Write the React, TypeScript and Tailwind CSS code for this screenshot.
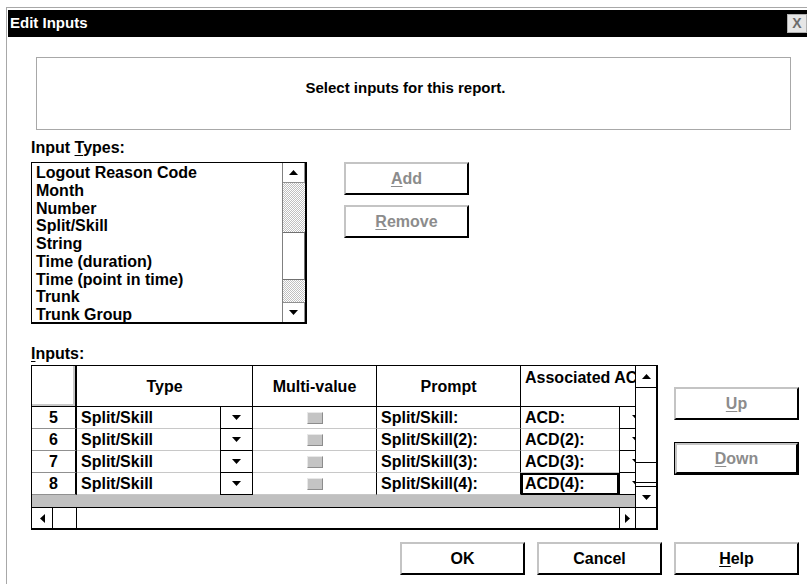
import React from "react";

const font = "font-['Liberation_Sans',Arial,sans-serif]";

function Tri({ dir }: { dir: "up" | "down" | "left" | "right" }) {
  if (dir === "up")
    return (
      <svg width="9" height="5" viewBox="0 0 9 5">
        <polygon points="0,5 9,5 4.5,0" fill="#000" />
      </svg>
    );
  if (dir === "down")
    return (
      <svg width="9" height="5" viewBox="0 0 9 5">
        <polygon points="0,0 9,0 4.5,5" fill="#000" />
      </svg>
    );
  if (dir === "left")
    return (
      <svg width="5" height="9" viewBox="0 0 5 9">
        <polygon points="5,0 5,9 0,4.5" fill="#000" />
      </svg>
    );
  return (
    <svg width="5" height="9" viewBox="0 0 5 9">
      <polygon points="0,0 0,9 5,4.5" fill="#000" />
    </svg>
  );
}

function Button({
  pre = "",
  u = "",
  post = "",
  disabled = false,
  isDefault = false,
}: {
  pre?: string;
  u?: string;
  post?: string;
  disabled?: boolean;
  isDefault?: boolean;
}) {
  const face = (
    <div
      className={`flex h-full w-full items-center justify-center border-2 border-t-[#c4c4c4] border-l-[#c4c4c4] border-r-black border-b-black bg-white text-[16px] font-bold ${
        disabled ? "text-[#8c8c8c]" : "text-black"
      }`}
    >
      {pre}
      {u && <span className="underline underline-offset-2">{u}</span>}
      {post}
    </div>
  );
  if (isDefault)
    return <div className="h-[33px] w-[125px] border border-black">{face}</div>;
  return <div className="h-[33px] w-[125px]">{face}</div>;
}

const inputTypes = [
  "Logout Reason Code",
  "Month",
  "Number",
  "Split/Skill",
  "String",
  "Time (duration)",
  "Time (point in time)",
  "Trunk",
  "Trunk Group",
];

const rows = [
  { n: 5, prompt: "Split/Skill:", acd: "ACD:" },
  { n: 6, prompt: "Split/Skill(2):", acd: "ACD(2):" },
  { n: 7, prompt: "Split/Skill(3):", acd: "ACD(3):" },
  { n: 8, prompt: "Split/Skill(4):", acd: "ACD(4):", focus: true },
];

function ListBox() {
  return (
    <div className="mt-[5px] flex h-[162px] w-[276px] border-l border-t border-r-2 border-b-2 border-black">
      <div className="flex-1 whitespace-nowrap pl-[4px] pt-[1px] text-[16px] font-bold leading-[17.75px]">
        {inputTypes.map((t) => (
          <div key={t}>{t}</div>
        ))}
      </div>
      <div className="flex w-[23px] flex-col border-l border-[#808080]">
        <div className="flex h-[20px] items-center justify-center border-b border-r border-[#909090] bg-white">
          <Tri dir="up" />
        </div>
        <div className="h-[49px] bg-[image:repeating-conic-gradient(#c0c0c0_0%_25%,#ffffff_0%_50%)] bg-[length:2px_2px]" />
        <div className="h-[48px] border-b border-r border-t border-[#707070] bg-white" />
        <div className="h-[22px] bg-[image:repeating-conic-gradient(#c0c0c0_0%_25%,#ffffff_0%_50%)] bg-[length:2px_2px]" />
        <div className="flex h-[20px] items-center justify-center border-r border-t border-[#909090] bg-white">
          <Tri dir="down" />
        </div>
      </div>
    </div>
  );
}

function Grid() {
  return (
    <div className="mt-[2px] flex h-[165px] w-[627px] border-l border-t border-r-2 border-b-2 border-black text-[16px] font-bold">
      <div className="flex w-[603px] flex-col">
        <div className="flex h-[41px] border-b border-black">
          <div className="w-[45px] border-r-2 border-black">
            <div className="h-full border-b-2 border-r-2 border-[#c8c8c8]" />
          </div>
          <div className="flex w-[176px] items-center justify-center border-r border-black pt-[2px]">Type</div>
          <div className="flex w-[124px] items-center justify-center border-r border-black pt-[2px]">Multi-value</div>
          <div className="flex w-[144px] items-center justify-center border-r border-black pt-[2px]">Prompt</div>
          <div className="w-[114px] overflow-hidden whitespace-nowrap pl-[4px] pt-[3px] leading-[18px]">Associated ACD</div>
        </div>
        {rows.map((r) => (
          <div key={r.n} className="flex h-[22px]">
            <div className="flex w-[45px] items-center justify-center border-b border-r-2 border-b-[#909090] border-r-black">
              {r.n}
            </div>
            <div className="flex w-[176px] border-r border-black">
              <div className="flex-1 border-b border-[#c8c8c8] pl-[4px] leading-[21px]">Split/Skill</div>
              <div className="flex w-[32px] items-center justify-center border-b border-l border-black">
                <Tri dir="down" />
              </div>
            </div>
            <div className="flex w-[124px] items-center justify-center border-b border-r border-b-[#c8c8c8] border-r-black">
              <div className="h-[12px] w-[16px] border border-b-[#8c8c8c] border-l-[#e8e8e8] border-r-[#8c8c8c] border-t-[#e8e8e8] bg-[#c4c4c4]" />
            </div>
            <div className="w-[144px] whitespace-nowrap border-b border-r border-b-[#c8c8c8] border-r-black pl-[4px] leading-[21px]">
              {r.prompt}
            </div>
            <div className="flex w-[114px] overflow-hidden">
              <div
                className={`w-[98px] shrink-0 whitespace-nowrap ${
                  r.focus ? "border-2 border-black pl-[2px] leading-[18px]" : "border-b border-[#c8c8c8] pl-[4px] leading-[21px]"
                }`}
              >
                {r.acd}
              </div>
              <div className="flex w-[33px] shrink-0 items-center justify-center border-b border-l border-black">
                <Tri dir="down" />
              </div>
            </div>
          </div>
        ))}
        <div className="h-[12px] bg-[#c0c0c0]" />
        <div className="flex h-[21px] border-t border-black">
          <div className="flex w-[21px] items-center justify-center border-r border-black">
            <Tri dir="left" />
          </div>
          <div className="w-[24px] border-r border-black" />
          <div className="flex-1" />
          <div className="flex w-[16px] items-center justify-center border-l border-black">
            <Tri dir="right" />
          </div>
        </div>
      </div>
      <div className="flex w-[21px] flex-col border-l border-black">
        <div className="flex h-[22px] items-center justify-center border-b border-black">
          <Tri dir="up" />
        </div>
        <div className="h-[74px]" />
        <div className="h-[21px] border-y border-black" />
        <div className="h-[3px]" />
        <div className="flex h-[21px] items-center justify-center border-t border-black">
          <Tri dir="down" />
        </div>
        <div className="h-[21px] border-t border-black" />
      </div>
    </div>
  );
}

export default function App() {
  return (
    <div className={`${font} h-[584px] w-[807px] overflow-hidden bg-white text-black`}>
      <div className="ml-[6px] mt-[7px] h-[577px] w-[801px] border-l border-t border-[#a8a8a8]">
        <div className="ml-[1px] mt-[2px] flex h-[27px] items-center bg-black pl-[2px]">
          <span className="text-[15px] font-bold text-white">Edit Inputs</span>
          <div className="ml-auto flex h-[19px] w-[20px] items-center justify-center border border-[#b0b0b0] bg-[#e6e6e6] text-[14px] font-bold text-[#6c6c6c]">
            X
          </div>
        </div>

        <div className="ml-[29px] mt-[20px] flex h-[73px] w-[755px] items-center justify-center border border-[#a8a8a8] pb-[11px] pr-[16px] text-[15px] font-bold">
          Select inputs for this report.
        </div>

        <div className="ml-[24px] mt-[9px] flex items-start">
          <div className="flex flex-col">
            <div className="h-[18px] text-[16px] font-bold leading-[18px]">
              Input <span className="underline underline-offset-2">T</span>ypes:
            </div>
            <ListBox />
          </div>
          <div className="ml-[37px] mt-[23px] flex flex-col gap-[10px]">
            <Button u="A" post="dd" disabled />
            <Button u="R" post="emove" disabled />
          </div>
        </div>

        <div className="ml-[24px] mt-[21px] flex items-start">
          <div className="flex flex-col">
            <div className="h-[18px] text-[16px] font-bold leading-[18px]">
              <span className="underline underline-offset-2">I</span>nputs:
            </div>
            <Grid />
          </div>
          <div className="ml-[16px] flex flex-col gap-[22px] pt-[42px]">
            <Button u="U" post="p" disabled />
            <Button u="D" post="own" disabled isDefault />
          </div>
        </div>

        <div className="ml-[393px] mt-[12px] flex gap-[12px]">
          <Button pre="OK" />
          <Button pre="Cancel" />
          <Button u="H" post="elp" />
        </div>
      </div>
    </div>
  );
}
